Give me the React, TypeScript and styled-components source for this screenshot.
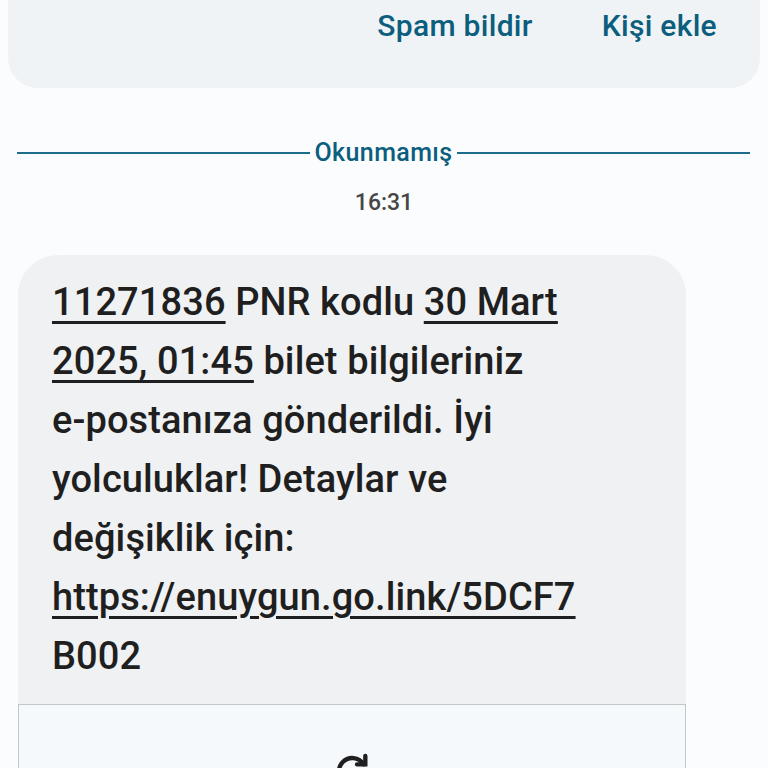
import React from "react";
import styled, { createGlobalStyle } from "styled-components";

const Global = createGlobalStyle`
  html, body { margin: 0; padding: 0; background: #fbfcfe; }
  body { font-family: "Roboto", "Noto Sans", sans-serif; overflow: hidden; }
`;

const Page = styled.div`
  width: 768px;
  height: 768px;
  overflow: hidden;
  display: flex;
  flex-direction: column;
  background: #fbfcfe;
  & > * { flex-shrink: 0; }
`;

const TopCard = styled.div`
  margin: -40px 8px 0 8px;
  height: 128px;
  background: #f0f3f6;
  border-radius: 0 0 30px 30px;
  display: flex;
  justify-content: flex-end;
  align-items: flex-end;
  padding: 0 43px 46px 0;
  box-sizing: border-box;
  gap: 69px;
`;

const ActionButton = styled.button`
  border: none;
  background: none;
  padding: 0;
  font-family: "Roboto", sans-serif;
  font-weight: 500;
  font-size: 30px;
  line-height: 32px;
  letter-spacing: 0.3px;
  color: #0b5e7d;
`;

const Divider = styled.div`
  margin: 50px 18px 0 17px;
  display: flex;
  align-items: center;
  gap: 4px;
`;

const Line = styled.div`
  flex: 1;
  height: 2px;
  background: #1c6d8a;
`;

const DividerLabel = styled.span`
  font-size: 25px;
  font-weight: 500;
  color: #0b5e7d;
  line-height: 30px;
  letter-spacing: 0.4px;
`;

const Time = styled.div`
  margin-top: 20px;
  text-align: center;
  font-size: 23px;
  font-weight: 500;
  color: #444746;
  line-height: 30px;
`;

const Bubble = styled.div`
  margin: 37px 0 0 18px;
  width: 668px;
  background: #f0f1f3;
  border-radius: 40px 40px 0 0;
  display: flex;
  flex-direction: column;
`;

const Message = styled.p`
  margin: 0;
  padding: 18px 20px 18px 34px;
  font-size: 38px;
  font-weight: 500;
  line-height: 59px;
  color: #1f1f1f;
  letter-spacing: 0.1px;
`;

const U = styled.span`
  text-decoration: underline;
  text-decoration-thickness: 3px;
  text-underline-offset: 6px;
`;

const Preview = styled.div`
  border: 1px solid #c4c7c8;
  border-bottom: none;
  background: #f6f9fc;
  height: 80px;
  display: flex;
  justify-content: center;
  align-items: flex-start;
  padding-top: 46px;
  box-sizing: border-box;
`;

export default function App() {
  return (
    <Page>
      <Global />
      <TopCard>
        <ActionButton>Spam bildir</ActionButton>
        <ActionButton>Kişi ekle</ActionButton>
      </TopCard>
      <Divider>
        <Line />
        <DividerLabel>Okunmamış</DividerLabel>
        <Line />
      </Divider>
      <Time>16:31</Time>
      <Bubble>
        <Message>
          <U>11271836</U> PNR kodlu <U>30 Mart</U>
          <br />
          <U>2025, 01:45</U> bilet bilgileriniz
          <br />
          e-postanıza gönderildi. İyi
          <br />
          yolculuklar! Detaylar ve
          <br />
          değişiklik için:
          <br />
          <U>https://enuygun.go.link/5DCF7</U>
          <br />
          B002
        </Message>
        <Preview>
          <svg width="40" height="40" viewBox="0 0 24 24" fill="none" stroke="#1f1f1f" strokeWidth="2.6" strokeLinecap="round">
            <path d="M19 8a8 8 0 1 0 1 6" />
            <path d="M20 3v5h-5" />
          </svg>
        </Preview>
      </Bubble>
    </Page>
  );
}
